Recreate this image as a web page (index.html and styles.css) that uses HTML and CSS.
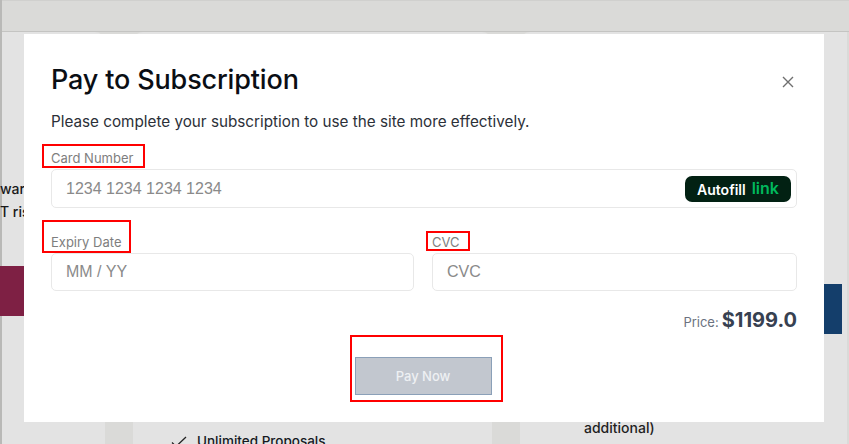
FILE: index.html
```html
<!DOCTYPE html>
<html lang="en">
<head>
<meta charset="utf-8">
<title>Pay to Subscription</title>
<link rel="stylesheet" href="styles.css">
</head>
<body>
<div class="page">
  <div class="topbar"></div>
  <main class="plans">
    <section class="plan plan-left">
      <p class="plan-copy">war<br>T ris</p>
      <div class="plan-btn-red"></div>
    </section>
    <section class="plan plan-mid">
      <div class="feature"><svg class="check" width="16" height="12" viewBox="0 0 16 12"><path d="M1 6.5 5 10.5 15 1" fill="none" stroke="#222" stroke-width="1.3"/></svg><span>Unlimited Proposals</span></div>
    </section>
    <section class="plan plan-right">
      <p class="plan-note">additional)</p>
    </section>
  </main>
  <div class="plan-btn-blue"></div>
</div>

<div class="modal">
  <header class="modal-head">
    <h1>Pay to Subscription</h1>
    <button class="close" aria-label="Close"><svg width="12" height="12" viewBox="0 0 12 12"><path d="M1 1 11 11M11 1 1 11" stroke="#6f6f6f" stroke-width="1.4" fill="none"/></svg></button>
  </header>
  <p class="lead">Please complete your subscription to use the site more effectively.</p>
  <div class="field field-card">
    <label class="label">Card Number</label>
    <div class="input input-card">
      <span class="ph">1234 1234 1234 1234</span>
      <span class="autofill"><b>Autofill</b><i>link</i></span>
    </div>
  </div>
  <div class="row">
    <div class="field">
      <label class="label">Expiry Date</label>
      <div class="input"><span class="ph">MM / YY</span></div>
    </div>
    <div class="field">
      <label class="label">CVC</label>
      <div class="input"><span class="ph">CVC</span></div>
    </div>
  </div>
  <div class="price"><span>Price:</span><strong>$1199.0</strong></div>
  <div class="actions"><button class="pay">Pay Now</button></div>
  <div class="mark mark-card"></div>
  <div class="mark mark-expiry"></div>
  <div class="mark mark-cvc"></div>
  <div class="mark mark-pay"></div>
</div>
</body>
</html>
```

FILE: styles.css
```css
* { box-sizing: border-box; }
html, body { margin: 0; height: 100%; }
body {
  width: 849px;
  height: 444px;
  overflow: hidden;
  position: relative;
  background: #dadad8;
  font-family: Inter, "Liberation Sans", sans-serif;
  color: #15191f;
}
.page {
  height: 444px;
  border-left: 2px solid #b9b9b7;
  position: relative;
}
.topbar {
  height: 32px;
  border-top: 1px solid #d0d0ce;
  border-bottom: 1px solid #c4c4c2;
}
.plans {
  display: flex;
  gap: 28px;
  height: 412px;
}
.plan {
  flex: none;
  background: #e3e3e3;
  border-radius: 10px 10px 0 0;
  position: relative;
}
.plan-left { width: 103px; border-top-left-radius: 0; }
.plan-mid { width: 359px; }
.plan-right { width: 327px; border-top-right-radius: 0; }
.plan-copy {
  margin: 0;
  position: absolute;
  top: 145px;
  left: -2px;
  font-size: 14px;
  line-height: 23px;
  font-weight: 500;
  white-space: nowrap;
  color: #1a1a1a;
}
.plan-btn-red {
  position: absolute;
  top: 234px;
  left: -2px;
  width: 105px;
  height: 50px;
  background: #7e2044;
}
.plan-btn-blue {
  position: absolute;
  top: 284px;
  left: 820px;
  width: 20px;
  height: 50px;
  background: #143e6b;
}
.feature {
  position: absolute;
  top: 401px;
  left: 38px;
  display: flex;
  align-items: center;
  gap: 10px;
  font-size: 13.5px;
  font-weight: 500;
  white-space: nowrap;
}
.check { margin-top: 1px; }
.plan-note {
  margin: 0;
  position: absolute;
  top: 387px;
  left: 64px;
  font-size: 14px;
  font-weight: 500;
  line-height: 18px;
  color: #1f1f1f;
}

.modal {
  position: absolute;
  left: 24px;
  top: 34px;
  width: 800px;
  height: 388px;
  background: #fff;
  padding: 27px 27px 0;
}
.modal-head {
  display: flex;
  justify-content: space-between;
  align-items: flex-start;
  height: 51px;
}
h1 {
  margin: 0;
  font-size: 27px;
  line-height: 38px;
  font-weight: 500;
  color: #0a0e14;
  letter-spacing: -0.15px;
}
.close {
  border: 0;
  background: none;
  padding: 0;
  margin: 15px 3px 0 0;
  width: 12px;
  height: 12px;
  display: block;
  line-height: 0;
}
.lead {
  margin: 0;
  font-size: 15.25px;
  line-height: 20px;
  color: #2c3038;
}
.field { display: flex; flex-direction: column; }
.field-card { margin-top: 17px; }
.label {
  font-size: 13px;
  line-height: 18px;
  height: 18px;
  color: #7e7e7e;
  margin-bottom: 2px;
}
.input {
  height: 39px;
  border: 1px solid #e8e8e8;
  border-radius: 5px;
  background: #fff;
  display: flex;
  align-items: center;
  justify-content: space-between;
  padding: 0 5px 0 14px;
}
.ph {
  font-family: "Liberation Sans", Arial, sans-serif;
  font-size: 16px;
  color: #8a8a8a;
}
.autofill {
  width: 106px;
  height: 26px;
  background: #022113;
  border-radius: 7px;
  display: flex;
  align-items: center;
  justify-content: center;
  gap: 6px;
}
.autofill b {
  color: #fff;
  font-size: 14px;
  font-weight: 600;
  margin-top: 2px;
}
.autofill i {
  color: #00b85c;
  font-style: normal;
  font-size: 16px;
  font-weight: 600;
  margin-top: -2px;
}
.row {
  display: grid;
  grid-template-columns: 363px 365px;
  gap: 18px;
  margin-top: 25px;
}
.row .input { height: 38px; }
.price {
  display: flex;
  justify-content: flex-end;
  align-items: baseline;
  gap: 3px;
  margin-top: 17px;
  height: 26px;
}
.price span { font-size: 13px; color: #6b7280; }
.price strong { font-size: 20px; font-weight: 700; color: #374151; }
.actions {
  display: flex;
  justify-content: center;
  margin-top: 23px;
  padding-right: 2px;
}
.pay {
  width: 137px;
  height: 38px;
  background: #c2c7cf;
  border: 1px solid #8ba0b8;
  color: #eef0f3;
  font-family: Inter, "Liberation Sans", sans-serif;
  font-size: 13px;
  font-weight: 500;
}
.mark {
  position: absolute;
  border: 2px solid #ff0000;
  pointer-events: none;
}
.mark-card { left: 18px; top: 110px; width: 103px; height: 24px; }
.mark-expiry { left: 18px; top: 186px; width: 89px; height: 33px; }
.mark-cvc { left: 402px; top: 197px; width: 44px; height: 20px; }
.mark-pay { left: 326px; top: 301px; width: 153px; height: 67px; }
```
